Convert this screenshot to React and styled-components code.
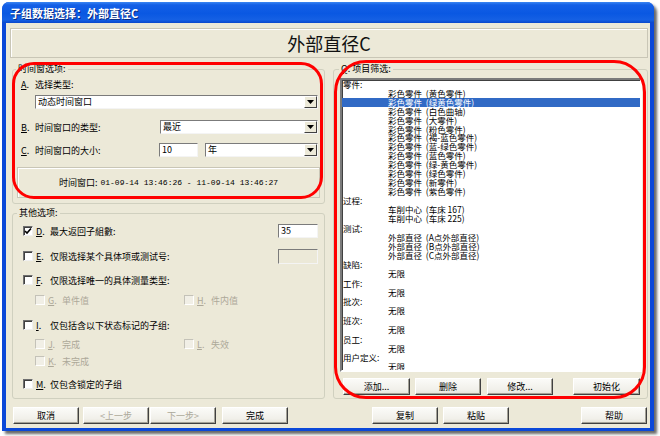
import React from 'react'
import styled, { createGlobalStyle } from 'styled-components'

const GlobalStyle = createGlobalStyle`
  html, body {
    margin: 0;
    background: #fff;
  }
  body {
    font-family: "Noto Sans CJK SC", "Noto Sans", sans-serif;
    font-size: 9px;
    color: #000;
  }
  * {
    box-sizing: border-box;
  }
`

const Page = styled.div`
  width: 660px;
  height: 436px;
  padding: 2px 0 0 2px;
`

const Window = styled.div`
  position: relative;
  width: 652px;
  height: 429px;
  display: flex;
  flex-direction: column;
  background: #0b48d8;
  border-radius: 7px 7px 0 0;
  box-shadow: 3px 3px 3px rgba(0, 0, 0, 0.6);
`

const TitleBar = styled.div`
  height: 21px;
  padding-left: 8px;
  display: flex;
  align-items: center;
  border-radius: 7px 7px 0 0;
  background: linear-gradient(180deg, #3b86f2 0%, #145fe6 14%, #0a58e2 55%, #1560e4 85%, #0a48cc 100%);
  color: #fff;
  font-size: 11px;
  font-weight: bold;
  text-shadow: 1px 1px 0 #0a2a80;
`

const Client = styled.div`
  flex: 1;
  margin: 0 4px 3px 4px;
  padding: 5px 2px 4px 4px;
  background: #ece9d8;
  display: flex;
  flex-direction: column;
`

const Header = styled.div`
  height: 30px;
  display: flex;
  align-items: center;
  justify-content: center;
  border: 1px solid #c9c6b6;
  box-shadow: inset 1px 1px 0 #fff;
  font-size: 18px;
  color: #111;
`

const Main = styled.div`
  margin-top: 5px;
  margin-left: 2px;
  height: 336px;
  display: flex;
  gap: 8px;
`

const Column = styled.div`
  width: ${p => p.$w}px;
  display: flex;
  flex-direction: column;
  gap: 3px;
`

const Group = styled.fieldset`
  margin: 0;
  padding: 0;
  min-width: 0;
  height: ${p => p.$h}px;
  border: 1px solid #d0d0bf;
  border-radius: 3px;
  display: flex;
  flex-direction: column;
`

const Legend = styled.legend`
  margin-left: ${p => p.$ml || 3}px;
  padding: 0 2px;
  line-height: 12px;
  font-size: 9px;
`

const Mnemonic = styled.span`
  width: 14px;
  flex: none;

  u {
    text-decoration: underline;
  }
`

const PromptLine = styled.div`
  margin-top: 4px;
  height: 12px;
  line-height: 12px;
  padding-left: 8px;
  display: flex;
`

const FormRow = styled.div`
  margin-top: ${p => p.$mt}px;
  height: 14px;
  padding: 0 6px 0 8px;
  display: flex;
  align-items: center;
`

const Combo = styled.div`
  width: ${p => (p.$w ? `${p.$w}px` : 'auto')};
  height: 14px;
  margin: ${p => p.$m || '0'};
  display: flex;
  align-items: center;
  background: #fff;
  border: 1px solid;
  border-color: #7b7b7b #f4f4f4 #f4f4f4 #7b7b7b;
`

const ComboText = styled.span`
  flex: 1;
  padding-left: 2px;
  line-height: 12px;
`

const DropButton = styled.span`
  width: 13px;
  height: 12px;
  display: flex;
  align-items: center;
  justify-content: center;
  background: #ece9d8;
  border: 1px solid;
  border-color: #fff #404040 #404040 #fff;
`

const Field = styled.div`
  width: ${p => p.$w}px;
  height: ${p => p.$h || 14}px;
  margin: ${p => p.$m || '0'};
  padding-left: 2px;
  line-height: 12px;
  background: ${p => (p.$disabled ? '#ece9d8' : '#fff')};
  border: 1px solid;
  border-color: #7b7b7b #f4f4f4 #f4f4f4 #7b7b7b;
`

const InfoPanel = styled.div`
  margin: 10px 4px 0 4px;
  height: 31px;
  display: flex;
  align-items: center;
  justify-content: center;
  border: 1px solid #c9c6b6;
  box-shadow: inset 1px 1px 0 #fff;
`

const Mono = styled.span`
  font-family: "Liberation Mono", "DejaVu Sans Mono", monospace;
  font-size: 8px;
  margin-left: 3px;
`

const CheckRow = styled.div`
  margin-top: ${p => p.$mt}px;
  height: 14px;
  padding: 0 6px 0 ${p => p.$indent}px;
  display: flex;
  align-items: center;
`

const CheckItem = styled.div`
  width: ${p => (p.$w ? `${p.$w}px` : 'auto')};
  display: flex;
  align-items: center;
  color: ${p => (p.$disabled ? '#aca899' : '#000')};
`

const Box = styled.span`
  width: 10px;
  height: 10px;
  margin-right: 3px;
  flex: none;
  display: flex;
  align-items: center;
  justify-content: center;
  background: ${p => (p.$disabled ? '#f1efe6' : '#fff')};
  border: 1px solid;
  border-color: ${p => (p.$disabled ? '#c4c2b8 #fff #fff #c4c2b8' : '#6f6f6f #f0f0f0 #f0f0f0 #6f6f6f')};
  box-shadow: ${p => (p.$disabled ? 'none' : 'inset 1px 1px 0 #404040')};
`

const ListBox = styled.div`
  margin: 3px 5px 0 6px;
  height: 294px;
  background: #fff;
  border: 2px solid;
  border-color: #7b7b7b #fff #fff #7b7b7b;
  box-shadow: inset 1px 1px 0 #404040;
  overflow: hidden;
  font-size: 8.5px;
`

const ListLine = styled.div`
  height: ${p => (p.$head ? 9 : 8.9)}px;
  line-height: ${p => (p.$head ? 9 : 8.9)}px;
  margin-top: ${p => (p.$gap ? 0.7 : 0)}px;
  padding-left: ${p => (p.$head ? 1 : 46)}px;
  white-space: pre;
  background: ${p => (p.$selected ? '#316ac5' : 'transparent')};
  color: ${p => (p.$selected ? '#fff' : '#000')};
`

const ButtonRow = styled.div`
  margin-top: ${p => p.$mt || 0}px;
  padding: 0 ${p => p.$pr || 0}px 0 ${p => p.$pl || 0}px;
  height: 17px;
  display: flex;
`

const Button = styled.div`
  width: ${p => p.$w || 66}px;
  height: 17px;
  margin-left: ${p => (p.$ml === 'auto' ? 'auto' : `${p.$ml || 0}px`)};
  display: flex;
  align-items: center;
  justify-content: center;
  background: linear-gradient(180deg, #fbfbf8 0%, #f1f0ea 70%, #e6e4da 100%);
  border: 1px solid;
  border-color: #fff #404040 #404040 #fff;
  box-shadow: inset -1px -1px 0 #a3a196;
  color: ${p => (p.$disabled ? '#aca899' : '#000')};
`

const Annotation = styled.div`
  position: absolute;
  left: ${p => p.$x}px;
  top: ${p => p.$y}px;
  width: ${p => p.$w}px;
  height: ${p => p.$h}px;
  border: 3px solid #ff0000;
  border-radius: ${p => p.$r}px;
  pointer-events: none;
`

const Arrow = () => (
  <svg width='7' height='4' viewBox='0 0 7 4'>
    <polygon points='0,0 7,0 3.5,4' fill='#000' />
  </svg>
)

const Check = () => (
  <svg width='8' height='8' viewBox='0 0 8 8'>
    <path d='M1 4 L3 6 L7 1.5' fill='none' stroke='#000' strokeWidth='1.6' />
  </svg>
)

const Letter = ({ ch }) => (
  <Mnemonic>
    <u>{ch}</u>.
  </Mnemonic>
)

const Select = ({ value, ...rest }) => (
  <Combo {...rest}>
    <ComboText>{value}</ComboText>
    <DropButton>
      <Arrow />
    </DropButton>
  </Combo>
)

const Option = ({ ch, label, checked, disabled, w }) => (
  <CheckItem $w={w} $disabled={disabled}>
    <Box $disabled={disabled}>{checked && <Check />}</Box>
    <Letter ch={ch} />
    <span>{label}</span>
  </CheckItem>
)

const colors = ['黄色零件', '绿黄色零件', '白色曲轴', '大零件', '粉色零件', '褐-蓝色零件', '蓝-绿色零件', '蓝色零件', '绿-黄色零件', '绿色零件', '新零件', '紫色零件']

const filters = [
  { head: '零件:', items: colors.map(c => `彩色零件  (${c})`) },
  { head: '过程:', items: ['车削中心  (车床 167)', '车削中心  (车床 225)'] },
  { head: '测试:', items: ['外部直径  (A点外部直径)', '外部直径  (B点外部直径)', '外部直径  (C点外部直径)'] },
  { head: '缺陷:', items: ['无限'] },
  { head: '工作:', items: ['无限'] },
  { head: '批次:', items: ['无限'] },
  { head: '班次:', items: ['无限'] },
  { head: '员工:', items: ['无限'] },
  { head: '用户定义:', items: ['无限'] }
]

const App = () => (
  <React.Fragment>
    <GlobalStyle />
    <Page>
      <Window>
        <TitleBar>子组数据选择：外部直径C</TitleBar>

        <Client>
          <Header>外部直径C</Header>

          <Main>
            <Column $w={313}>
              <Group $h={141}>
                <Legend>时间窗选项:</Legend>

                <PromptLine>
                  <Letter ch='A' />
                  <span>选择类型:</span>
                </PromptLine>
                <Select value='动态时间窗口' $m='4px 6px 0 22px' />

                <FormRow $mt={11}>
                  <Letter ch='B' />
                  <span>时间窗口的类型:</span>
                  <Select value='最近' $w={158} $m='0 0 0 auto' />
                </FormRow>

                <FormRow $mt={9}>
                  <Letter ch='C' />
                  <span>时间窗口的大小:</span>
                  <Field $w={39} $m='0 0 0 auto'>10</Field>
                  <Select value='年' $w={113} $m='0 0 0 7px' />
                </FormRow>

                <InfoPanel>
                  时间窗口:
                  <Mono>01-09-14 13:46:26 - 11-09-14 13:46:27</Mono>
                </InfoPanel>
              </Group>

              <Group $h={192}>
                <Legend $ml={4}>其他选项:</Legend>

                <CheckRow $mt={5} $indent={10}>
                  <Option ch='D' label='最大返回子組數:' checked />
                  <Field $w={40} $m='0 0 0 auto'>35</Field>
                </CheckRow>

                <CheckRow $mt={11} $indent={10}>
                  <Option ch='E' label='仅限选择某个具体项或测试号:' />
                  <Field $w={40} $h={15} $m='0 0 0 auto' $disabled />
                </CheckRow>

                <CheckRow $mt={10} $indent={10}>
                  <Option ch='F' label='仅限选择唯一的具体测量类型:' />
                </CheckRow>

                <CheckRow $mt={6} $indent={22}>
                  <Option ch='G' label='单件值' w={149} disabled />
                  <Option ch='H' label='件内值' disabled />
                </CheckRow>

                <CheckRow $mt={11} $indent={10}>
                  <Option ch='I' label='仅包括含以下状态标记的子组:' />
                </CheckRow>

                <CheckRow $mt={5} $indent={22}>
                  <Option ch='J' label='完成' w={149} disabled />
                  <Option ch='L' label='失效' disabled />
                </CheckRow>

                <CheckRow $mt={3} $indent={22}>
                  <Option ch='K' label='未完成' disabled />
                </CheckRow>

                <CheckRow $mt={9} $indent={10}>
                  <Option ch='M' label='仅包含锁定的子组' />
                </CheckRow>
              </Group>
            </Column>

            <Column $w={315}>
              <Group $h={336}>
                <Legend $ml={5}>
                  <u>Q</u>. 项目筛选:
                </Legend>

                <ListBox>
                  {filters.map((f, i) => (
                    <React.Fragment key={f.head}>
                      <ListLine $head $gap={i > 0}>
                        {f.head}
                      </ListLine>
                      {f.items.map((item, j) => (
                        <ListLine key={item} $selected={i === 0 && j === 1}>
                          {item}
                        </ListLine>
                      ))}
                    </React.Fragment>
                  ))}
                </ListBox>

                <ButtonRow $mt={6} $pl={9}>
                  <Button $w={67}>添加...</Button>
                  <Button $ml={5}>删除</Button>
                  <Button $ml={6}>修改...</Button>
                  <Button $w={67} $ml={20}>初始化</Button>
                </ButtonRow>
              </Group>
            </Column>
          </Main>

          <ButtonRow $mt={8} $pl={3} $pr={1}>
            <Button>取消</Button>
            <Button $ml={4} $disabled>&lt;上一步</Button>
            <Button $ml={1} $disabled>下一步&gt;</Button>
            <Button $ml={6}>完成</Button>
            <Button $ml={84}>复制</Button>
            <Button $ml={5}>粘贴</Button>
            <Button $ml='auto'>帮助</Button>
          </ButtonRow>
        </Client>

        <Annotation $x={10} $y={60} $w={311} $h={137} $r={22} />
        <Annotation $x={332} $y={58} $w={312} $h={339} $r={32} />
      </Window>
    </Page>
  </React.Fragment>
)

export default App
